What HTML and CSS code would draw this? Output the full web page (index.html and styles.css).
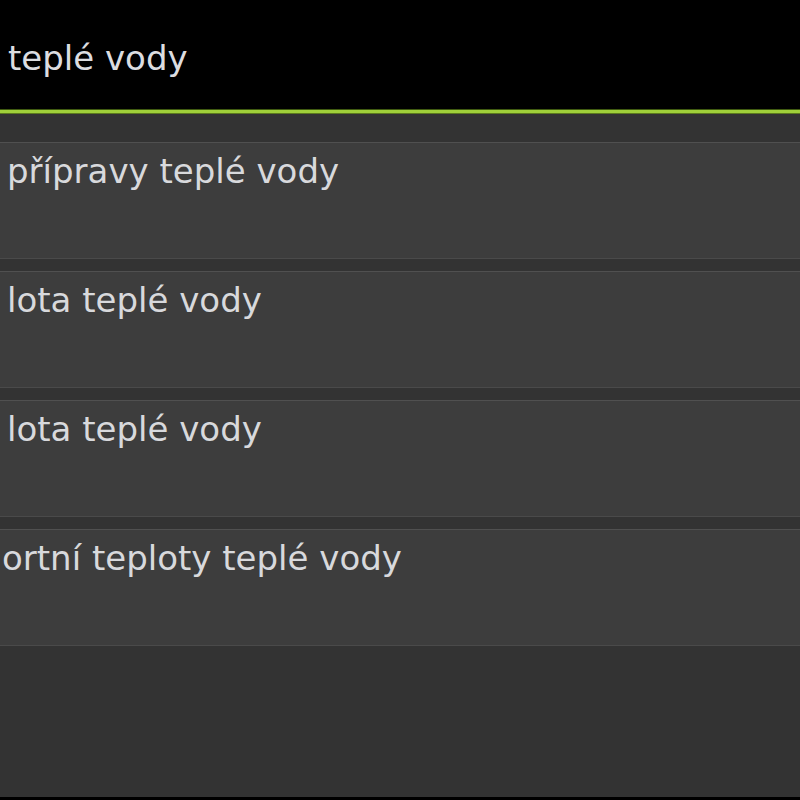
FILE: index.html
```html
<!DOCTYPE html>
<html lang="cs">
<head>
<meta charset="utf-8">
<link rel="stylesheet" href="styles.css">
</head>
<body>
<div class="screen">
  <header class="title-bar">
    <h1 class="title">teplé vody</h1>
  </header>
  <ul class="menu">
    <li class="item">přípravy teplé vody</li>
    <li class="item">lota teplé vody</li>
    <li class="item">lota teplé vody</li>
    <li class="item item-cut">ortní teploty teplé vody</li>
  </ul>
  <div class="filler"></div>
  <div class="bottom-bar"></div>
</div>
</body>
</html>
```

FILE: styles.css
```css
html, body {
  margin: 0;
  padding: 0;
  background: #333333;
}
.screen {
  width: 800px;
  height: 800px;
  display: flex;
  flex-direction: column;
  overflow: hidden;
  font-family: "DejaVu Sans", Verdana, sans-serif;
  color: #d9d9d9;
}
.title-bar {
  height: 109px;
  background: #000;
  border-bottom: 5px solid #99cc33;
  display: flex;
  align-items: center;
  position: relative;
}
.title-bar::after {
  content: "";
  position: absolute;
  left: 0;
  right: 0;
  bottom: -5px;
  height: 5px;
  background: linear-gradient(#3f5a10 0, #3f5a10 1px, #a0d03a 1px, #a0d03a 4px, #5c7a1e 4px);
}
.title {
  margin: 6px 0 0 8px;
  font-size: 34px;
  font-weight: normal;
  color: #dcdde0;
  white-space: nowrap;
}
.menu {
  list-style: none;
  margin: 0;
  padding: 28px 0 0 0;
  display: flex;
  flex-direction: column;
  gap: 12px;
}
.item {
  height: 104px;
  padding-top: 11px;
  padding-left: 7px;
  box-sizing: content-box;
  background: #3d3d3d;
  border-top: 1px solid #505050;
  border-bottom: 1px solid #4a4a4a;
  font-size: 34px;
  line-height: 1;
  white-space: nowrap;
  color: #d8d9dc;
  display: flex;
  align-items: flex-start;
}
.item-cut {
  padding-left: 2px;
}
.filler {
  flex: 1;
}
.bottom-bar {
  height: 3px;
  background: #000;
}
```
